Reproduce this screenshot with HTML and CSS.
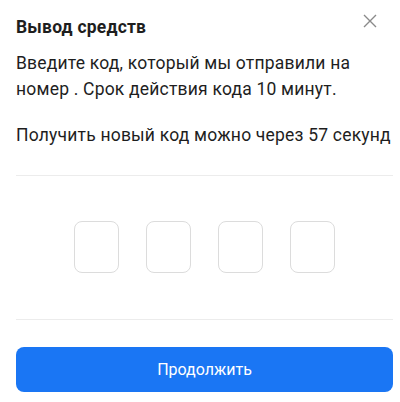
FILE: index.html
```html
<!DOCTYPE html>
<html lang="ru">
<head>
    <meta charset="UTF-8">
    <meta name="viewport" content="width=device-width, initial-scale=1.0">
    <title>Вывод средств</title>
    <link rel="stylesheet" href="styles.css">
</head>
<body>
    <div class="sheet">
        <header class="sheet-header">
            <h1>Вывод средств</h1>
            <button class="close" aria-label="Закрыть">
                <svg width="16" height="16" viewBox="0 0 16 16">
                    <path d="M2 2L14 14M14 2L2 14" stroke="#8a8a8a" stroke-width="1.4" fill="none"/>
                </svg>
            </button>
        </header>

        <p class="hint">Введите код, который мы отправили на номер . Срок действия кода 10 минут.</p>
        <p class="hint timer">Получить новый код можно через 57 секунд</p>

        <div class="divider"></div>

        <div class="code">
            <input class="cell" maxlength="1">
            <input class="cell" maxlength="1">
            <input class="cell" maxlength="1">
            <input class="cell" maxlength="1">
        </div>

        <div class="divider"></div>

        <button class="submit">Продолжить</button>
    </div>
</body>
</html>
```

FILE: styles.css
```css
/* Reset styles */
* {
    margin: 0;
    padding: 0;
    box-sizing: border-box;
}

body {
    font-family: Roboto, 'Noto Sans', sans-serif;
    background-color: #fff;
    color: #1e1e1e;
}

.sheet {
    padding: 12px 7px 0 16px;
}

.sheet-header {
    display: flex;
    justify-content: space-between;
    align-items: center;
    height: 30px;
    margin-bottom: 8px;
}

.sheet-header h1 {
    font-size: 17.5px;
    font-weight: 700;
    letter-spacing: 0.2px;
}

.close {
    background: none;
    border: none;
    width: 30px;
    height: 30px;
    display: flex;
    align-items: center;
    justify-content: center;
    margin-right: 8px;
    margin-top: -12px;
}

.hint {
    font-size: 17.5px;
    line-height: 26px;
    letter-spacing: 0.2px;
    padding-right: 30px;
}

.timer {
    margin-top: 20px;
    padding-right: 0;
    white-space: nowrap;
}

.divider {
    height: 1px;
    background-color: #ececec;
    margin-top: 27px;
}

.code {
    display: flex;
    justify-content: center;
    gap: 27px;
    margin: 45px 0 46px;
}

.cell {
    width: 45px;
    height: 52px;
    border: 1.5px solid #dcdcdc;
    border-radius: 8px;
    outline: none;
}

.submit {
    display: block;
    width: 100%;
    height: 45px;
    margin-top: 27px;
    border: none;
    border-radius: 8px;
    background-color: #1a76f4;
    color: #fff;
    font-family: Roboto, 'Noto Sans', sans-serif;
    font-size: 16px;
}
```
